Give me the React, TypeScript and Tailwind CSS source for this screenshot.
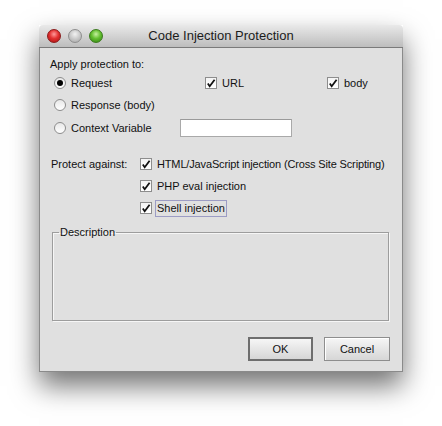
import React from 'react';

const font = { fontFamily: '"Liberation Sans", Arial, sans-serif' };

function Check({ checked = true }: { checked?: boolean }) {
  return (
    <span className="flex h-[12px] w-[12px] shrink-0 items-center justify-center border border-[#8d8d8d] bg-gradient-to-b from-[#f4f4f4] to-white">
      {checked && (
        <svg width="10" height="10" viewBox="0 0 10 10">
          <path d="M1.8 5.4 L3.7 8.2 L8.6 1.8" fill="none" stroke="#111" strokeWidth="1.8" strokeLinejoin="miter" />
        </svg>
      )}
    </span>
  );
}

function Radio({ selected = false }: { selected?: boolean }) {
  return (
    <span className="flex h-[12px] w-[12px] shrink-0 items-center justify-center rounded-full border border-[#8d8d8d] bg-gradient-to-b from-[#e8e8e8] to-white">
      {selected && <span className="h-[6px] w-[6px] rounded-full bg-black" />}
    </span>
  );
}

function Light({ color }: { color: 'red' | 'grey' | 'green' }) {
  const cls = {
    red: 'bg-[radial-gradient(circle_at_50%_35%,#ff9a9a_0%,#e23030_45%,#a80f0f_100%)] border-[#8a1a1a]',
    grey: 'bg-[radial-gradient(circle_at_50%_35%,#f2f2f2_0%,#c9c9c9_50%,#a4a4a4_100%)] border-[#8e8e8e]',
    green: 'bg-[radial-gradient(circle_at_50%_35%,#c6f0a0_0%,#64c030_45%,#2f7e10_100%)] border-[#3a7a1c]',
  }[color];
  return <span className={`h-[14px] w-[14px] rounded-full border ${cls}`} />;
}

export default function App() {
  return (
    <div className="min-h-screen bg-white pl-[39px] pt-[25px] text-[11px] text-[#111]" style={font}>
      <div className="w-[364px] shadow-[0_14px_26px_rgba(0,0,0,0.55)]">
        {/* title bar */}
        <div className="relative flex h-[23px] items-center rounded-t-[4px] border-b border-[#7a7a7a] bg-gradient-to-b from-[#e9e9e9] to-[#bdbdbd]">
          <div className="flex items-center gap-[7px] pl-[8px]">
            <Light color="red" />
            <Light color="grey" />
            <Light color="green" />
          </div>
          <div className="absolute inset-0 flex items-center justify-center text-[13px] text-[#1c1c1c]">
            Code Injection Protection
          </div>
        </div>

        {/* body */}
        <div className="border-x border-b border-[#8a8a8a] bg-[#e0e0e0] pb-[10px] pl-[10px] pr-[12px] pt-[8px]">
          <div className="flex h-[16px] items-center">Apply protection to:</div>

          <div className="mt-[2px] flex h-[18px] items-center pl-[4px]">
            <div className="flex w-[151px] items-center gap-[5px]">
              <Radio selected />
              <span>Request</span>
            </div>
            <div className="flex w-[122px] items-center gap-[5px]">
              <Check />
              <span>URL</span>
            </div>
            <div className="flex items-center gap-[5px]">
              <Check />
              <span>body</span>
            </div>
          </div>

          <div className="mt-[4px] flex h-[18px] items-center gap-[5px] pl-[4px]">
            <Radio />
            <span>Response (body)</span>
          </div>

          <div className="mt-[5px] flex h-[18px] items-center pl-[4px]">
            <div className="flex w-[126px] items-center gap-[5px]">
              <Radio />
              <span>Context Variable</span>
            </div>
            <div className="h-[18px] w-[112px] border border-[#a9a9a9] border-t-[#9a9a9a] bg-white" />
          </div>

          <div className="mt-[18px] flex">
            <div className="flex h-[18px] w-[90px] shrink-0 items-center pl-px">Protect against:</div>
            <div className="flex flex-col gap-[4px] whitespace-nowrap">
              <div className="flex h-[18px] items-center gap-[5px]">
                <Check />
                <span className="tracking-[-0.15px]">HTML/JavaScript injection (Cross Site Scripting)</span>
              </div>
              <div className="flex h-[18px] items-center gap-[5px]">
                <Check />
                <span>PHP eval injection</span>
              </div>
              <div className="flex h-[18px] items-center gap-[3px]">
                <Check />
                <span className="border border-[#9c9cc4] px-px leading-[15px]">Shell injection</span>
              </div>
            </div>
          </div>

          <fieldset className="ml-[2px] mt-[8px] h-[96px] w-[337px] border border-[#9d9d9d] shadow-[inset_1px_1px_0_#f6f6f6,1px_1px_0_#f6f6f6]">
            <legend className="ml-[6px] px-px leading-[14px]">Description</legend>
          </fieldset>

          <div className="mt-[16px] flex justify-end gap-[11px]">
            <button className="h-[24px] w-[65px] border-2 border-[#6e6e6e] bg-gradient-to-b from-[#f6f6f6] to-[#d6d6d6] text-[11px] text-[#111]">
              OK
            </button>
            <button className="h-[24px] w-[66px] border border-[#8e8e8e] bg-gradient-to-b from-[#f6f6f6] to-[#d6d6d6] text-[11px] text-[#111] shadow-[inset_1px_1px_0_#ffffff]">
              Cancel
            </button>
          </div>
        </div>
      </div>
    </div>
  );
}
